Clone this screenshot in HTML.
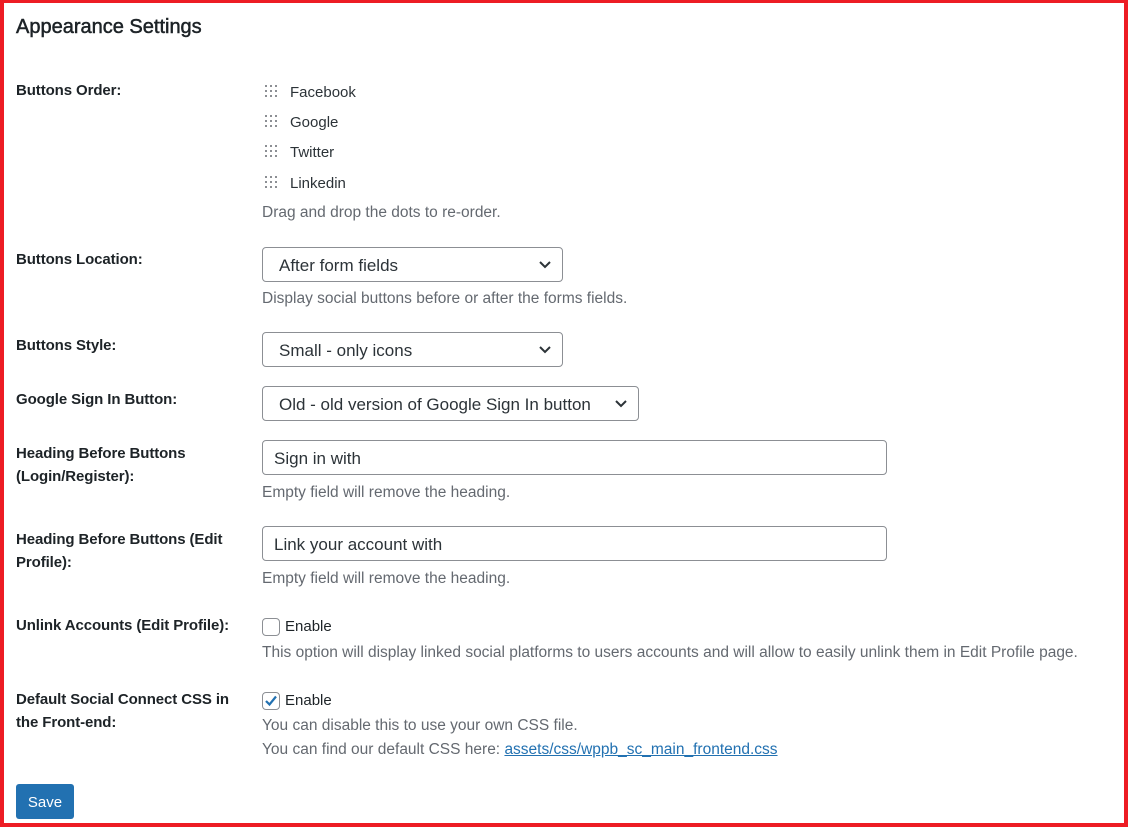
<!DOCTYPE html>
<html><head><meta charset="utf-8"><style>
*{box-sizing:border-box}
body{margin:0;width:1129px;height:829px;background:#fff;font-family:"Liberation Sans",Arial,sans-serif;color:#1d2327;position:relative;overflow:hidden}
.frame{position:absolute;left:0;top:0;width:1128px;height:827px;border:4px solid #ed1c24;border-top-width:3px}
.a{position:absolute;white-space:nowrap}
h1{position:absolute;left:16px;top:16px;margin:0;font-size:20px;font-weight:normal;color:#1d2327;-webkit-text-stroke:.5px #1d2327}
.lb{position:absolute;left:16px;font-size:15px;font-weight:bold;color:#1d2327;line-height:23px;letter-spacing:-.1px}
.t{font-size:15px;color:#2c3338}
.d{font-size:15.5px;color:#646970}
.sel,.inp{position:absolute;left:262px;height:35px;border:1px solid #8c8f94;border-radius:4px;font-size:17px;color:#2c3338;padding:8px 0 0 16px;background:#fff;white-space:nowrap}
.inp{padding-left:11px;width:625px}
.sel svg{position:absolute;right:10px;top:12px}
.dots{position:absolute;left:265px}
.cb{position:absolute;left:262px;width:18px;height:18px;border:1px solid #8c8f94;border-radius:4px;background:#fff}
.btn{position:absolute;left:16px;top:784px;width:58px;height:35px;background:#2271b1;border-radius:3px;color:#fff;font-size:15px;text-align:center;line-height:37px}
a{color:#2271b1}
</style></head><body>
<div class="frame"></div>
<h1>Appearance Settings</h1>

<div class="lb" style="top:79px">Buttons Order:</div>
<svg class="dots" style="top:85px" width="13" height="13"><g fill="#8c8f94"><rect x="0" y="0" width="2" height="2"/><rect x="5" y="0" width="2" height="2"/><rect x="10" y="0" width="2" height="2"/><rect x="0" y="5" width="2" height="2"/><rect x="5" y="5" width="2" height="2"/><rect x="10" y="5" width="2" height="2"/><rect x="0" y="10" width="2" height="2"/><rect x="5" y="10" width="2" height="2"/><rect x="10" y="10" width="2" height="2"/></g></svg>
<div class="a t" style="left:290px;top:84px">Facebook</div>
<svg class="dots" style="top:115px" width="13" height="13"><g fill="#8c8f94"><rect x="0" y="0" width="2" height="2"/><rect x="5" y="0" width="2" height="2"/><rect x="10" y="0" width="2" height="2"/><rect x="0" y="5" width="2" height="2"/><rect x="5" y="5" width="2" height="2"/><rect x="10" y="5" width="2" height="2"/><rect x="0" y="10" width="2" height="2"/><rect x="5" y="10" width="2" height="2"/><rect x="10" y="10" width="2" height="2"/></g></svg>
<div class="a t" style="left:290px;top:114px">Google</div>
<svg class="dots" style="top:145px" width="13" height="13"><g fill="#8c8f94"><rect x="0" y="0" width="2" height="2"/><rect x="5" y="0" width="2" height="2"/><rect x="10" y="0" width="2" height="2"/><rect x="0" y="5" width="2" height="2"/><rect x="5" y="5" width="2" height="2"/><rect x="10" y="5" width="2" height="2"/><rect x="0" y="10" width="2" height="2"/><rect x="5" y="10" width="2" height="2"/><rect x="10" y="10" width="2" height="2"/></g></svg>
<div class="a t" style="left:290px;top:144px">Twitter</div>
<svg class="dots" style="top:176px" width="13" height="13"><g fill="#8c8f94"><rect x="0" y="0" width="2" height="2"/><rect x="5" y="0" width="2" height="2"/><rect x="10" y="0" width="2" height="2"/><rect x="0" y="5" width="2" height="2"/><rect x="5" y="5" width="2" height="2"/><rect x="10" y="5" width="2" height="2"/><rect x="0" y="10" width="2" height="2"/><rect x="5" y="10" width="2" height="2"/><rect x="10" y="10" width="2" height="2"/></g></svg>
<div class="a t" style="left:290px;top:175px">Linkedin</div>
<div class="a d" style="left:262px;top:204px">Drag and drop the dots to re-order.</div>

<div class="lb" style="top:248px">Buttons Location:</div>
<div class="sel" style="top:247px;width:301px">After form fields<svg width="14" height="10"><path d="M2 2l5 5 5-5" stroke="#2c3338" stroke-width="2" fill="none"/></svg></div>
<div class="a d" style="left:262px;top:290px">Display social buttons before or after the forms fields.</div>

<div class="lb" style="top:334px">Buttons Style:</div>
<div class="sel" style="top:332px;width:301px">Small - only icons<svg width="14" height="10"><path d="M2 2l5 5 5-5" stroke="#2c3338" stroke-width="2" fill="none"/></svg></div>

<div class="lb" style="top:388px">Google Sign In Button:</div>
<div class="sel" style="top:386px;width:377px">Old - old version of Google Sign In button<svg width="14" height="10"><path d="M2 2l5 5 5-5" stroke="#2c3338" stroke-width="2" fill="none"/></svg></div>

<div class="lb" style="top:442px">Heading Before Buttons<br>(Login/Register):</div>
<div class="inp" style="top:440px">Sign in with</div>
<div class="a d" style="left:262px;top:484px">Empty field will remove the heading.</div>

<div class="lb" style="top:528px">Heading Before Buttons (Edit<br>Profile):</div>
<div class="inp" style="top:526px">Link your account with</div>
<div class="a d" style="left:262px;top:570px">Empty field will remove the heading.</div>

<div class="lb" style="top:614px">Unlink Accounts (Edit Profile):</div>
<div class="cb" style="top:618px"></div>
<div class="a t" style="left:285px;top:618px;color:#1d2327">Enable</div>
<div class="a d" style="left:262px;top:644px">This option will display linked social platforms to users accounts and will allow to easily unlink them in Edit Profile page.</div>

<div class="lb" style="top:688px">Default Social Connect CSS in<br>the Front-end:</div>
<div class="cb" style="top:692px"><svg width="16" height="16" style="position:absolute;left:0;top:0"><path d="M3 8l3.5 3.5L13 3.5" stroke="#2271b1" stroke-width="2.2" fill="none"/></svg></div>
<div class="a t" style="left:285px;top:692px;color:#1d2327">Enable</div>
<div class="a d" style="left:262px;top:717px">You can disable this to use your own CSS file.</div>
<div class="a d" style="left:262px;top:741px">You can find our default CSS here: <a href="#">assets/css/wppb_sc_main_frontend.css</a></div>

<div class="btn">Save</div>
</body></html>
